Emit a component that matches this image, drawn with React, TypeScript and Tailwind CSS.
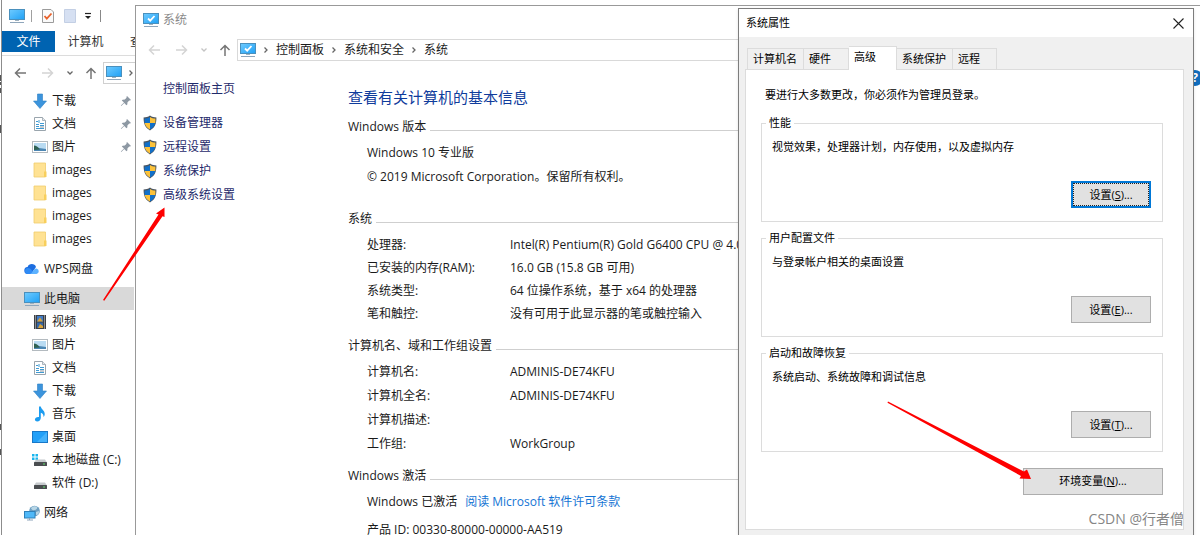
import React from 'react';

interface IconProps {
  className?: string;
}

const MonitorIcon = ({ check = false, className = 'w-4 h-4' }: IconProps & { check?: boolean }) => (
  <svg viewBox="0 0 16 16" className={`shrink-0 ${className}`}>
    <defs>
      <linearGradient id="screen" x1="0" y1="0" x2="1" y2="1">
        <stop offset="0" stopColor="#6fcbff" />
        <stop offset="1" stopColor="#1fa0f5" />
      </linearGradient>
    </defs>
    <rect x="0.5" y="1.5" width="15" height="10" fill="url(#screen)" stroke="#4a90bd" />
    <rect x="6" y="12" width="4" height="1" fill="#9fb2c0" />
    <rect x="1" y="14" width="14" height="1" fill="#8fa6bb" />
    {check && <path d="M5 6.5l2.2 2.2L11.5 4" fill="none" stroke="#fff" strokeWidth="1.8" />}
  </svg>
);

const DownloadIcon = () => (
  <svg viewBox="0 0 16 16" className="w-4 h-4 shrink-0">
    <path d="M5.5 1h5v7h4L8 15.500 1.500 8h4z" fill="#3c94dc" stroke="#2d7fc4" strokeWidth="0.6" />
  </svg>
);

const DocIcon = () => (
  <svg viewBox="0 0 16 16" className="w-4 h-4 shrink-0">
    <path d="M2.5 1.500h8l3 3v10h-11z" fill="#fff" stroke="#9aa5ad" />
    <path d="M10.5 1.500v3h3" fill="#e4e8eb" stroke="#9aa5ad" strokeWidth="0.8" />
    <path d="M4 5.500h2M7 4v3M4 8.500h3M8 7.500h4M8 9.500h4M4 10.500h3M4 12.500h8" stroke="#3f9ad2" />
    <path d="M8 11h4" stroke="#6f7f8a" strokeWidth="0.8" />
  </svg>
);

const PictureIcon = () => (
  <svg viewBox="0 0 16 16" className="w-4 h-4 shrink-0">
    <rect x="0.5" y="2.500" width="15" height="11" fill="#fff" stroke="#b3babf" />
    <rect x="2" y="4" width="12" height="8" fill="#b9dbf2" />
    <path d="M2 8l5 1 7 1v2H2z" fill="#4c86b3" />
    <path d="M2 6.500c2 0 4 1.500 6 4L2 11z" fill="#2f6152" />
  </svg>
);

const FolderIcon = () => (
  <svg viewBox="0 0 16 16" className="w-4 h-4 shrink-0">
    <path d="M2 1h11.500v14H2z" fill="#ffe293" stroke="#f0cd6c" strokeWidth="0.8" />
    <path d="M12 9.500h2.500V15H12z" fill="#f8cf5c" />
  </svg>
);

const CloudIcon = () => (
  <svg viewBox="0 0 16 16" className="w-4 h-4 shrink-0">
    <path d="M4 13a3.500 3.500 0 0 1-.4-7A4.500 4.500 0 0 1 12 6l-5 7z" fill="#1c6de0" />
    <path d="M4 13a3 3 0 0 1 0-6c3 0 4 3 7 6z" fill="#2f8bf5" />
    <path d="M6 13c3-1 3-5.500 6.500-5.500a2.800 2.800 0 0 1 0 5.500z" fill="#5db2ff" />
  </svg>
);

const VideoIcon = () => (
  <svg viewBox="0 0 16 16" className="w-4 h-4 shrink-0">
    <rect x="2" y="1" width="12" height="14" fill="#3b3f45" />
    <path d="M3.500 1.500v13M12.500 1.500v13" stroke="#d8dce0" strokeDasharray="1 1" />
    <rect x="5" y="2" width="6" height="5.500" fill="#3f7bc6" />
    <rect x="5" y="8.500" width="6" height="5.500" fill="#3467a8" />
    <path d="M5 7.500l3-4 3 4zM6 14l2-4 3 2v2z" fill="#d9a33a" />
  </svg>
);

const MusicIcon = () => (
  <svg viewBox="0 0 16 16" className="w-4 h-4 shrink-0">
    <path d="M7 .5h1.800c.4 3 4.400 4 3.900 8-.1 1-.6 2-1.200 2.500.2-2.500-1.200-4-2.700-4.300V12c0 2-1.700 3.400-3.500 3.400C1.700 15.400 2.200 10.500 7 11z" fill="#1c9cf0" />
  </svg>
);

const DesktopIcon = () => (
  <svg viewBox="0 0 16 16" className="w-4 h-4 shrink-0">
    <rect x="0.5" y="2.500" width="15" height="11" fill="#22a0f8" stroke="#1878c8" />
    <path d="M15 3v10H5z" fill="#45b2fb" />
  </svg>
);

const DriveIcon = ({ system = false }: { system?: boolean }) => (
  <svg viewBox="0 0 16 16" className="w-4 h-4 shrink-0">
    {system && <path d="M0 2h2.500v2.500H0zM3.500 2H6v2.500H3.500zM0 5.500h2.500V8H0zM3.500 5.500H6V8H3.500z" fill="#19b5ee" />}
    <path d="M4 7.500h9l2 3H2z" fill="#c6cacd" />
    <rect x="2" y="10" width="13" height="4" rx="0.5" fill="#4a4d50" />
    <rect x="11" y="11.500" width="2" height="1" fill="#5ee06a" />
  </svg>
);

const NetworkIcon = () => (
  <svg viewBox="0 0 16 16" className="w-4 h-4 shrink-0">
    <circle cx="10.500" cy="6" r="5.300" fill="#6d9fc2" />
    <path d="M7 3c2-2 5-2 6-1s-1 3-2 3-3 1-4-2zM12 7l3-1c0 3-1 4-3 4z" fill="#b8d6e6" />
    <rect x="0.500" y="6.500" width="10.500" height="6.500" fill="#4fb8f8" stroke="#2f80b8" />
    <path d="M3 15h6M5.500 13v2" stroke="#8fa6bb" />
  </svg>
);

const ShieldIcon = () => (
  <svg viewBox="0 0 14 16" className="w-[14px] h-4 shrink-0">
    <path d="M7 .6c2 1.400 4 1.900 6.400 2C13.600 9 11.500 13 7 15.400 2.500 13 .4 9 .6 2.600 3 2.500 5 2 7 .6z" fill="#4a5560" />
    <path d="M7 1.900V8H1.700C1.600 6.500 1.500 5 1.600 3.500 3.600 3.400 5.400 2.900 7 1.900z" fill="#1170c9" />
    <path d="M7 1.900V8h5.300c.1-1.500.2-3 .1-4.500C10.400 3.400 8.600 2.900 7 1.900z" fill="#fcc23a" />
    <path d="M7 8H1.700C2.300 11 4 13 7 14.400z" fill="#fcc23a" />
    <path d="M7 8h5.300C11.700 11 10 13 7 14.400z" fill="#1170c9" />
  </svg>
);

const PinIcon = () => (
  <svg viewBox="0 0 12 12" className="w-3 h-3 shrink-0">
    <path d="M7 1l4 4-1 .6-.7-.1L7.500 7.300l-.2 2.200-.9.700L4.300 8 1.500 10.800l-.6.200.2-.7L4 7.500 1.800 5.500l.8-.8 2.200-.2L6.600 2.700 6.400 2z" fill="#8d98a3" />
  </svg>
);

const ArrowIcon = ({ dir, dim = false }: { dir: 'left' | 'right' | 'up'; dim?: boolean }) => {
  const paths = {
    left: 'M12 6H1.500M6 1.500L1.500 6 6 10.500',
    right: 'M0 6h10.500M6 1.500L10.500 6 6 10.500',
    up: 'M6 12V1.500M1.500 6L6 1.500 10.500 6',
  };
  return (
    <svg viewBox="0 0 12 12" className="w-3 h-3 shrink-0">
      <path d={paths[dir]} fill="none" stroke={dim ? '#d4d4d4' : '#757575'} strokeWidth="1.500" />
    </svg>
  );
};

const Chevron = ({ dir, dim = false }: { dir: 'down' | 'right'; dim?: boolean }) => (
  <svg viewBox="0 0 6 6" className="w-[6px] h-[6px] shrink-0">
    <path
      d={dir === 'down' ? 'M.5 1.500L3 4 5.500 1.500' : 'M1.500 .5L4 3 1.500 5.500'}
      fill="none"
      stroke={dim ? '#c4c4c4' : '#666'}
      strokeWidth="1.300"
    />
  </svg>
);

const quickAccess = [
  { label: '下载', icon: <DownloadIcon />, pinned: true },
  { label: '文档', icon: <DocIcon />, pinned: true },
  { label: '图片', icon: <PictureIcon />, pinned: true },
  { label: 'images', icon: <FolderIcon /> },
  { label: 'images', icon: <FolderIcon /> },
  { label: 'images', icon: <FolderIcon /> },
  { label: 'images', icon: <FolderIcon /> },
];

const thisPc = [
  { label: '视频', icon: <VideoIcon /> },
  { label: '图片', icon: <PictureIcon /> },
  { label: '文档', icon: <DocIcon /> },
  { label: '下载', icon: <DownloadIcon /> },
  { label: '音乐', icon: <MusicIcon /> },
  { label: '桌面', icon: <DesktopIcon /> },
  { label: '本地磁盘 (C:)', icon: <DriveIcon system /> },
  { label: '软件 (D:)', icon: <DriveIcon /> },
];

interface TreeItemProps {
  label: string;
  icon: React.ReactNode;
  pinned?: boolean;
  root?: boolean;
  selected?: boolean;
}

const TreeItem = ({ label, icon, pinned, root, selected }: TreeItemProps) => (
  <li>
    <a
      href="#"
      className={`flex items-center gap-1 h-[23px] pr-0.5 whitespace-nowrap ${root ? 'pl-[22px]' : 'pl-[30px]'} ${selected ? 'bg-[#d9d9d9]' : ''}`}
    >
      {icon}
      <span className="flex-1">{label}</span>
      {pinned && <PinIcon />}
    </a>
  </li>
);

const Explorer = () => (
  <section className="absolute inset-y-0 left-px w-64 border-l border-[#8c8c8c] bg-white">
    <header className="flex items-center h-[31px] pl-[7px]">
      <MonitorIcon />
      <span className="w-px h-3 bg-[#a0a0a0] ml-1.5 mr-2.5" />
      <svg viewBox="0 0 12 14" className="w-3 h-[14px]">
        <path d="M.5.500h8.500l2.500 2.500v10.500H.5z" fill="#fafafa" stroke="#9b9b9b" />
        <path d="M2.500 7l2.300 2.700L9.500 4.500" fill="none" stroke="#e8622c" strokeWidth="1.800" />
      </svg>
      <svg viewBox="0 0 12 14" className="w-3 h-[14px] ml-2.5">
        <path d="M.5.500h11v13H.5z" fill="#d6e0f2" stroke="#c3cfe4" />
      </svg>
      <svg viewBox="0 0 8 8" className="w-2 h-2 ml-2">
        <path d="M1 1.500h6" stroke="#222" strokeWidth="1.200" />
        <path d="M1 4h6L4 7z" fill="#222" />
      </svg>
      <span className="w-px h-3 bg-[#888] ml-2" />
    </header>
    <div role="tablist" className="flex items-start h-[25px] border-b border-[#dcdcdc]">
      <button role="tab" aria-selected="true" className="w-[53px] h-[21px] bg-[#0063b1] text-white">文件</button>
      <button role="tab" aria-selected="false" className="w-[61px] h-[21px] text-[#333]">计算机</button>
      <button role="tab" aria-selected="false" className="h-[21px] pl-[14px] text-[#333]">查看</button>
    </div>
    <nav className="flex items-center h-[33px] pl-3">
      <ArrowIcon dir="left" />
      <span className="w-4" />
      <ArrowIcon dir="right" dim />
      <span className="w-[13px]" />
      <Chevron dir="down" />
      <span className="w-3" />
      <ArrowIcon dir="up" />
      <div className="flex flex-1 items-center gap-1.5 h-[22px] ml-1.5 pl-0.5 border border-[#d0d0d0]">
        <MonitorIcon />
        <Chevron dir="right" />
      </div>
    </nav>
    <div className="flex flex-col gap-[7px] w-[132px]">
      <ul>
        {quickAccess.map((item, i) => (
          <TreeItem key={i} {...item} />
        ))}
      </ul>
      <ul>
        <TreeItem label="WPS网盘" icon={<CloudIcon />} root />
      </ul>
      <ul>
        <TreeItem label="此电脑" icon={<MonitorIcon />} root selected />
        {thisPc.map((item) => (
          <TreeItem key={item.label} {...item} />
        ))}
      </ul>
      <ul>
        <TreeItem label="网络" icon={<NetworkIcon />} root />
      </ul>
    </div>
  </section>
);

const GroupTitle = ({ children }: { children: React.ReactNode }) => (
  <h2 className="flex items-end gap-1 leading-4">
    {children}
    <span className="flex-1 h-px mb-1 bg-[#cfcfcf]" />
  </h2>
);

const InfoRow = ({ label, value }: { label: string; value: string }) => (
  <div className="flex">
    <dt className="w-[143px] shrink-0">{label}</dt>
    <dd>{value}</dd>
  </div>
);

const SystemWindow = () => (
  <section className="absolute top-[5px] bottom-0 left-[135px] right-0 border-t border-l border-[#999] bg-white">
    <header className="flex items-center gap-1 h-[27px] pl-[7px] text-[#8a8a8a]">
      <MonitorIcon check />
      <h1>系统</h1>
    </header>
    <nav className="flex items-center h-[33px] pl-3 pr-1.5">
      <ArrowIcon dir="left" dim />
      <span className="w-4" />
      <ArrowIcon dir="right" dim />
      <span className="w-[13px]" />
      <Chevron dir="down" dim />
      <span className="w-3" />
      <ArrowIcon dir="up" />
      <div className="flex flex-1 items-center h-[22px] ml-1.5 pl-0.5 border border-[#d9d9d9] whitespace-nowrap">
        <MonitorIcon check />
        <span className="px-[7px]"><Chevron dir="right" /></span>
        <a href="#">控制面板</a>
        <span className="px-[7px]"><Chevron dir="right" /></span>
        <a href="#">系统和安全</a>
        <span className="px-[7px]"><Chevron dir="right" /></span>
        <a href="#">系统</a>
      </div>
    </nav>
    <div className="flex">
      <aside className="w-[212px] shrink-0 pt-[11px] pl-[7px] leading-6 text-[#1f2a6b]">
        <a href="#" className="block pl-5">控制面板主页</a>
        <ul className="mt-2.5">
          {['设备管理器', '远程设置', '系统保护', '高级系统设置'].map((label) => (
            <li key={label}>
              <a href="#" className="flex items-center gap-1.5">
                <ShieldIcon />
                {label}
              </a>
            </li>
          ))}
        </ul>
      </aside>
      <main className="flex-1 min-w-0 pt-5 pr-1.5 whitespace-nowrap">
        <h1 className="mb-[11px] text-[15px] leading-[22px] text-[#0f3c9c]">查看有关计算机的基本信息</h1>

        <GroupTitle>Windows 版本</GroupTitle>
        <div className="mt-1.5 pl-[19px] leading-6">
          <p>Windows 10 专业版</p>
          <p>© 2019 Microsoft Corporation。保留所有权利。</p>
        </div>

        <div className="mt-[22px]"><GroupTitle>系统</GroupTitle></div>
        <dl className="mt-1.5 pl-[19px] leading-[23px]">
          <InfoRow label="处理器:" value="Intel(R) Pentium(R) Gold G6400 CPU @ 4.0" />
          <InfoRow label="已安装的内存(RAM):" value="16.0 GB (15.8 GB 可用)" />
          <InfoRow label="系统类型:" value="64 位操作系统，基于 x64 的处理器" />
          <InfoRow label="笔和触控:" value="没有可用于此显示器的笔或触控输入" />
        </dl>

        <div className="mt-[13px]"><GroupTitle>计算机名、域和工作组设置</GroupTitle></div>
        <dl className="mt-1.5 pl-[19px] leading-6">
          <InfoRow label="计算机名:" value="ADMINIS-DE74KFU" />
          <InfoRow label="计算机全名:" value="ADMINIS-DE74KFU" />
          <InfoRow label="计算机描述:" value="" />
          <InfoRow label="工作组:" value="WorkGroup" />
        </dl>

        <div className="mt-3"><GroupTitle>Windows 激活</GroupTitle></div>
        <div className="mt-1.5 pl-[19px] leading-6">
          <p>
            Windows 已激活
            <a href="#" className="ml-2 text-[#1474d4]">阅读 Microsoft 软件许可条款</a>
          </p>
          <p className="mt-1">产品 ID: 00330-80000-00000-AA519</p>
        </div>
      </main>
    </div>
    <button aria-label="帮助" className="absolute top-16 -right-[3px] w-4 h-4 rounded-full bg-[#0f6cbd] text-white font-bold leading-4">?</button>
  </section>
);

const tabs = ['计算机名', '硬件', '高级', '系统保护', '远程'];
const tabWidths = ['w-[57px]', 'w-[45px]', 'w-[48px]', 'w-[56px]', 'w-[44px]'];

const groups = [
  { title: '性能', text: '视觉效果，处理器计划，内存使用，以及虚拟内存', hotkey: 'S', focused: true },
  { title: '用户配置文件', text: '与登录帐户相关的桌面设置', hotkey: 'E', focused: false },
  { title: '启动和故障恢复', text: '系统启动、系统故障和调试信息', hotkey: 'T', focused: false },
];

const PropertiesDialog = () => (
  <section
    role="dialog"
    aria-label="系统属性"
    className="absolute top-2 bottom-0 right-1.5 flex flex-col w-[456px] border-t border-x border-[#7d7d7d] bg-[#f0f0f0] text-[11px] text-black shadow-sm"
  >
    <header className="flex items-center justify-between h-7 pl-[7px] pr-[9px] bg-white">
      <h1>系统属性</h1>
      <button aria-label="关闭">
        <svg viewBox="0 0 11 11" className="w-[11px] h-[11px]">
          <path d="M.5.500l10 10M10.500.500l-10 10" stroke="#222" strokeWidth="1.100" />
        </svg>
      </button>
    </header>
    <div className="flex flex-col flex-1 pt-[9px] pl-1.5 pr-[9px] pb-[5px]">
      <div role="tablist" className="flex items-end pl-0.5">
        {tabs.map((tab, i) => (
          <button
            key={tab}
            role="tab"
            aria-selected={i === 2}
            className={`${tabWidths[i]} border-t border-r border-[#dcdcdc] pl-[5px] text-left whitespace-nowrap ${
              i === 2 ? 'relative z-10 h-6 -mb-px pb-0.5 bg-white' : 'h-[21px] bg-[#f0f0f0]'
            } ${i === 0 ? 'border-l' : ''}`}
          >
            {tab}
          </button>
        ))}
      </div>
      <div role="tabpanel" className="flex flex-col flex-1 pt-4 pl-[15px] pr-5 border border-[#dcdcdc] bg-white">
        <p className="pl-1 leading-[18px]">要进行大多数更改，你必须作为管理员登录。</p>
        <div className="flex flex-col gap-2 mt-[11px] leading-4">
          {groups.map((group) => (
            <fieldset key={group.title} className="border border-[#dcdcdc] pb-[13px]">
              <legend className="ml-1 px-[3px]">{group.title}</legend>
              <p className="pt-2 pl-2.5">{group.text}</p>
              <div className="flex justify-end mt-[26px] pr-[11px]">
                <button
                  className={`w-20 h-[27px] bg-[#e1e1e1] ${
                    group.focused
                      ? 'border-2 border-[#0078d7] outline-1 outline-dotted outline-[#222] -outline-offset-3'
                      : 'border border-[#adadad]'
                  }`}
                >
                  设置(<u>{group.hotkey}</u>)...
                </button>
              </div>
            </fieldset>
          ))}
        </div>
        <button className="self-end w-[140px] h-[27px] mt-4 border border-[#adadad] bg-[#e1e1e1]">
          环境变量(<u>N</u>)...
        </button>
      </div>
    </div>
    <svg viewBox="0 0 146 82" className="absolute top-[392px] left-[147px] w-[146px] h-[82px] pointer-events-none">
      <path d="M2 .5L138 70.500l3-2 4 9.500-11.500-.5 1.500-2.500L1.500 1.800z" fill="#fe0000" />
    </svg>
    <p className="absolute bottom-[7px] right-[9px] text-sm leading-[18px] text-[#858585]">CSDN @行者僧</p>
  </section>
);

export default function App() {
  return (
    <div className="relative h-screen overflow-hidden bg-white text-xs text-[#1a1a1a] font-['Open_Sans','Noto_Sans_CJK_SC',sans-serif]">
      {/* edge of the page behind the windows */}
      <svg viewBox="0 0 2 535" className="absolute top-0 left-0 w-0.5 h-[535px]">
        <path d="M0 75h2v6H0zM0 82h2v3H0zM0 88h2v5H0zM0 125h1v8H0zM0 424h1v6H0zM0 449h1v6H0z" fill="#555" />
      </svg>
      <Explorer />
      <SystemWindow />
      <PropertiesDialog />
      <svg viewBox="0 0 64 96" className="absolute top-[206px] left-[102px] w-16 h-24 pointer-events-none">
        <path d="M1 94L56.500 8.500 54 7.500 62.500 1.500v9.500l-2-.8L2.300 94.800z" fill="#fe0000" />
      </svg>
    </div>
  );
}
